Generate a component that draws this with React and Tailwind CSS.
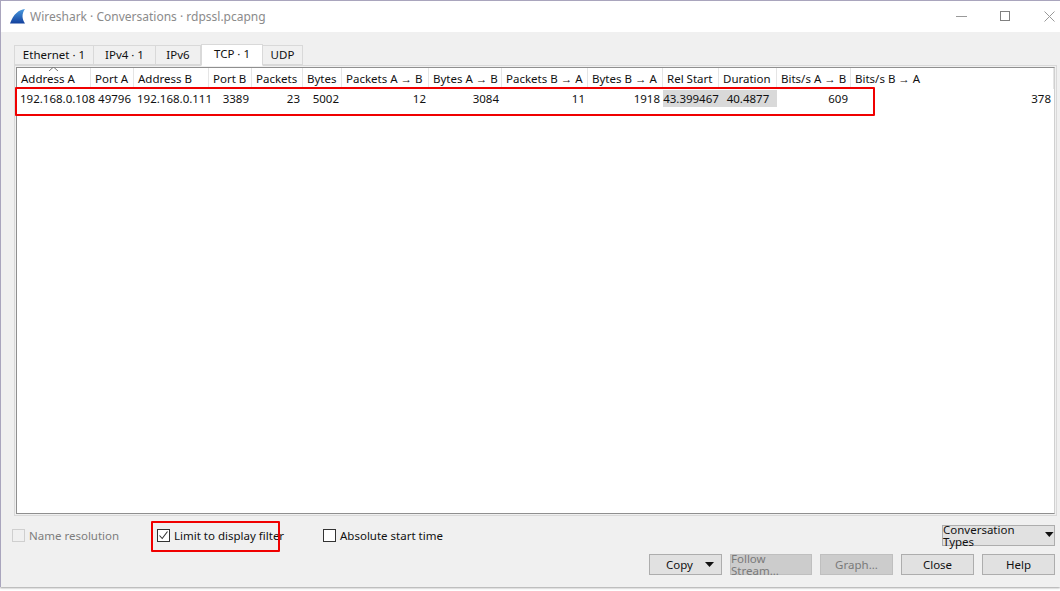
const font = { fontFamily: '"Noto Sans", sans-serif' };
const cols = [
  ["Address A", 74, "192.168.0.108", "l"],
  ["Port A", 43, "49796", "r"],
  ["Address B", 75, "192.168.0.111", "l"],
  ["Port B", 43, "3389", "r"],
  ["Packets", 51, "23", "r"],
  ["Bytes", 39, "5002", "r"],
  ["Packets A → B", 87, "12", "r"],
  ["Bytes A → B", 73, "3084", "r"],
  ["Packets B → A", 86, "11", "r"],
  ["Bytes B → A", 75, "1918", "r"],
  ["Rel Start", 56, "43.399467", "g"],
  ["Duration", 58, "40.4877", "g"],
  ["Bits/s A → B", 74, "609", "r"],
  ["Bits/s B → A", 203, "378", "r"],
];

function Tab({ label, w, active }) {
  return active ? (
    <div className={`h-[22px] -mb-px z-10 bg-white border border-[#d9d9d9] border-b-white flex items-center justify-center text-[#111] pb-[3px]`} style={{ width: w }}>{label}</div>
  ) : (
    <div className="h-[20px] bg-[#f0f0f0] border border-[#d9d9d9] border-l-0 first:border-l flex items-center justify-center text-[#111]" style={{ width: w }}>{label}</div>
  );
}

function Btn({ children, w, disabled, className = "" }) {
  return (
    <div className={`h-[21px] flex items-center justify-center border ${disabled ? "bg-[#cccccc] border-[#bfbfbf] text-[#7a7a7a]" : "bg-[#e1e1e1] border-[#adadad] text-[#111]"} ${className}`} style={{ width: w }}>{children}</div>
  );
}

function Caret({ className = "" }) {
  return <svg width="9" height="5" viewBox="0 0 9 5" className={className}><path d="M0 0H9L4.5 5Z" fill="#111" /></svg>;
}

function Check({ checked, disabled }) {
  return (
    <div className={`w-[13px] h-[13px] border flex items-center justify-center ${disabled ? "border-[#cfcfcf] bg-[#f0f0f0]" : "border-[#333] bg-white"}`}>
      {checked && <svg width="11" height="11" viewBox="0 0 11 11"><path d="M1.5 5.5L4.2 8.5L9.5 1.5" fill="none" stroke="#333" strokeWidth="1.1" /></svg>}
    </div>
  );
}

export default function App() {
  return (
    <div className="w-[1060px] h-[591px] bg-white overflow-hidden text-[11.5px] leading-none relative" style={font}>
      <div className="h-[587px] border-t border-l border-[#a9a5bd] border-b-0 flex flex-col bg-[#f0f0f0] shadow-[0_1px_2px_#a0a0a0]">
        {/* title bar */}
        <div className="h-[31px] bg-white flex items-center shrink-0">
          <svg width="17" height="17" viewBox="0 0 17 17" className="ml-[8px] mt-[-1px]">
            <defs>
              <linearGradient id="fin" x1="0" y1="0" x2="0" y2="1">
                <stop offset="0" stopColor="#4a9be0" />
                <stop offset="1" stopColor="#123f9c" />
              </linearGradient>
            </defs>
            <path d="M16 1C10 1.5 4.5 6 1 15.5L16 15.5C13 11 12.5 6 16 1Z" fill="url(#fin)" />
          </svg>
          <span className="ml-[4px] text-[12px] text-[#8b8b8b]">Wireshark · Conversations · rdpssl.pcapng</span>
          <div className="ml-auto flex items-center gap-[33px] mr-[5px] text-[#8a8a8a]">
            <svg width="11" height="11" viewBox="0 0 11 11"><path d="M0 5.5H11" stroke="#999" fill="none" /></svg>
            <svg width="11" height="11" viewBox="0 0 11 11"><rect x=".5" y=".5" width="9" height="9" stroke="#808080" fill="none" /></svg>
            <svg width="11" height="11" viewBox="0 0 11 11"><path d="M.5.5L10.5 10.5M10.5.5L.5 10.5" stroke="#999" fill="none" /></svg>
          </div>
        </div>

        {/* tabs */}
        <div className="flex items-end h-[33px] pl-[13px] shrink-0">
          <Tab label="Ethernet · 1" w={80} />
          <Tab label="IPv4 · 1" w={62} />
          <Tab label="IPv6" w={45} />
          <Tab label="TCP · 1" w={62} active />
          <Tab label="UDP" w={40} />
        </div>

        {/* table frame */}
        <div className="ml-[13px] w-[1043px] h-[451px] border border-[#d9d9d9] p-px flex shrink-0">
          <div className="flex-1 bg-white border border-[#8f8f8f] border-r-[#d0d0d0] relative">
            <svg width="9" height="4" viewBox="0 0 9 4" className="absolute left-[32px] top-[-1px]"><path d="M0 4L4.5 0L9 4" fill="none" stroke="#777" /></svg>
            <div className="flex h-[21px]">
              {cols.map((c) => (
                <div key={c[0]} className="h-full flex items-center pl-[4px] border-r border-[#e5e5e5] text-[#111] shrink-0 whitespace-nowrap overflow-hidden" style={{ width: c[1] }}>{c[0]}</div>
              ))}
            </div>
            <div className="flex h-[17px] mt-[1px]">
              {cols.map((c) => (
                <div key={c[0]} className={`h-full flex items-center px-[3px] text-[#111] shrink-0 whitespace-nowrap ${c[3] === "l" ? "justify-start" : c[3] === "g" ? "justify-center bg-[#d9d9d9]" : "justify-end"}`} style={{ width: c[1] }}>{c[2]}</div>
              ))}
            </div>
          </div>
        </div>

        {/* options */}
        <div className="flex items-start pl-[11px] pr-[5px] mt-[9px] h-[22px] shrink-0">
          <div className="flex items-center h-[21px] w-[139px] text-[#7d7d7d]"><Check disabled /><span className="ml-[4px]">Name resolution</span></div>
          <div className="flex items-center h-[21px] w-[165px] text-[#111] pl-[6px]"><Check checked /><span className="ml-[4px]">Limit to display filter</span></div>
          <div className="flex items-center h-[21px] text-[#111] pl-[7px]"><Check /><span className="ml-[4px]">Absolute start time</span></div>
          <Btn w={113} className="ml-auto gap-[2px]">Conversation Types<Caret className="mb-[3px]" /></Btn>
        </div>

        {/* buttons */}
        <div className="flex justify-end gap-[8px] pr-[5px] mt-[7px] shrink-0">
          <Btn w={73} className="relative pr-[12px]">Copy<Caret className="absolute right-[7px] top-[7px]" /></Btn>
          <Btn w={82} disabled>Follow Stream...</Btn>
          <Btn w={73} disabled>Graph...</Btn>
          <Btn w={73}>Close</Btn>
          <Btn w={73}>Help</Btn>
        </div>
      </div>

      {/* annotation rectangles drawn over the screenshot */}
      <div className="absolute left-[15px] top-[87px] w-[860px] h-[29px] border-2 border-[#f00000] rounded-[1px]" />
      <div className="absolute left-[151px] top-[521px] w-[129px] h-[31px] border-2 border-[#f00000] rounded-[1px]" />
    </div>
  );
}
